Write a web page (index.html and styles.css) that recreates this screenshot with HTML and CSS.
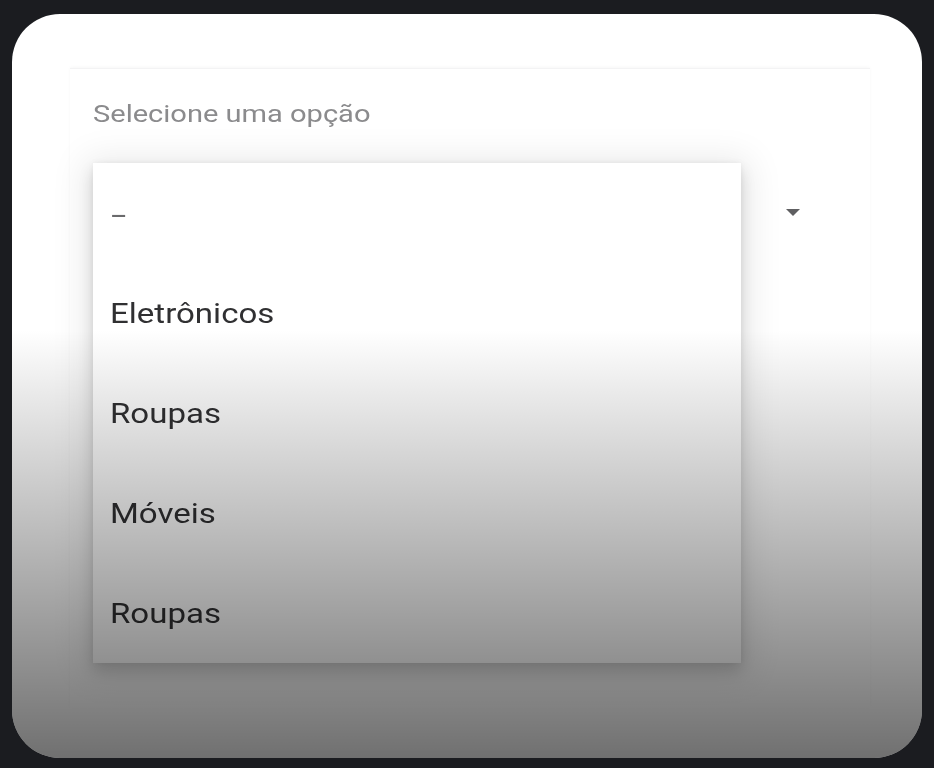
FILE: index.html
```html
<!DOCTYPE html>
<html lang="pt">
<head>
<meta charset="utf-8">
<link rel="stylesheet" href="styles.css">
</head>
<body>
<div class="card">
  <div class="panel">
    <div class="label"><span class="wide">Selecione uma opção</span></div>
    <div class="field">
      <svg class="arrow" width="14" height="8" viewBox="0 0 14 8"><path d="M0 0 L14 0 L7 7 Z" fill="#5f5f61"/></svg>
      <ul class="menu">
        <li class="item"><span class="wide dash">–</span></li>
        <li class="item"><span class="wide">Eletrônicos</span></li>
        <li class="item"><span class="wide">Roupas</span></li>
        <li class="item"><span class="wide">Móveis</span></li>
        <li class="item"><span class="wide">Roupas</span></li>
      </ul>
    </div>
  </div>
  <div class="shade"></div>
</div>
</body>
</html>
```

FILE: styles.css
```css
html, body {
  margin: 0;
  padding: 0;
  background: #1b1c20;
  width: 934px;
  height: 768px;
  overflow: hidden;
  font-family: Roboto, "Noto Sans", sans-serif;
}
.card {
  position: relative;
  margin: 14px 0 0 12px;
  width: 910px;
  height: 744px;
  background: #ffffff;
  border-radius: 48px;
  overflow: hidden;
  box-sizing: border-box;
  padding: 54px 52px 0 58px;
}
.panel {
  border-top: 1px solid #f3f3f4;
  box-shadow: 0 -1px 3px rgba(0,0,0,0.03);
  padding: 24px 0 0 23px;
  height: 640px;
  box-sizing: border-box;
}
.wide {
  display: inline-block;
  transform: scaleX(1.18);
  transform-origin: left center;
  white-space: nowrap;
  filter: blur(0.4px);
}
.label {
  font-size: 24px;
  color: #8b8b8d;
  line-height: 42px;
}
.label .wide {
  transform: scaleX(1.21);
}
.field {
  position: relative;
  margin-top: 28px;
  height: 100px;
  width: 720px;
}
.arrow {
  position: absolute;
  left: 693px;
  top: 46px;
}
.menu {
  position: absolute;
  left: 0;
  top: 0;
  width: 648px;
  margin: 0;
  padding: 0;
  list-style: none;
  background: #ffffff;
  box-shadow: 0 8px 14px rgba(0,0,0,0.13), 0 4px 34px 8px rgba(0,0,0,0.09), 0 0 6px rgba(0,0,0,0.05);
  z-index: 2;
}
.item {
  height: 100px;
  display: flex;
  align-items: center;
  padding-left: 17px;
  font-size: 28px;
  color: #303032;
}
.item .dash {
  color: #6a6a6c;
  transform: scaleX(0.95);
  padding-top: 6px;
}
.shade {
  position: absolute;
  left: 0;
  right: 0;
  top: 0;
  bottom: 0;
  pointer-events: none;
  z-index: 5;
  background: linear-gradient(to bottom, rgba(0,0,0,0) 0px, rgba(0,0,0,0) 316px, rgba(0,0,0,0.56) 744px);
}
```
